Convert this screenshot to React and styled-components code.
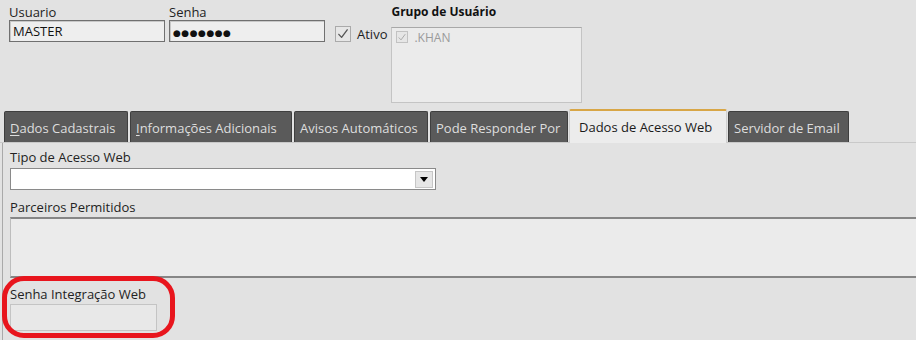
import React from "react";
import styled, { createGlobalStyle } from "styled-components";

const GlobalStyle = createGlobalStyle`
  html, body {
    margin: 0;
    padding: 0;
    background: #e2e2e2;
  }
  body {
    font-family: "Open Sans", "Noto Sans", "Liberation Sans", sans-serif;
    font-size: 13px;
    color: #1e1e1e;
  }
`;

const Page = styled.div`
  position: relative;
  width: 916px;
  height: 340px;
  overflow: hidden;
  background: #e2e2e2;
`;

const TopRow = styled.div`
  display: flex;
  align-items: flex-start;
  padding: 4px 0 0 9px;
  height: 102px;
  box-sizing: border-box;
`;

const Field = styled.div`
  display: flex;
  flex-direction: column;
  width: ${(p) => p.width}px;
  margin-right: ${(p) => p.gap || 0}px;
`;

const Label = styled.div`
  line-height: 16px;
  height: 16px;
  color: ${(p) => (p.bold ? "#111" : "#222")};
  font-weight: ${(p) => (p.bold ? 700 : 400)};
  font-size: ${(p) => (p.bold ? "12px" : "13px")};
  margin-top: ${(p) => p.mt || 0}px;
  margin-bottom: ${(p) => p.mb || 0}px;
  white-space: nowrap;
`;

const TextBox = styled.div`
  box-sizing: border-box;
  height: 22px;
  width: 100%;
  background: #eeeeee;
  border: 1px solid #707070;
  box-shadow: inset 1px 1px 0 #c8c8c8;
  padding: 0 3px;
  font-size: 13px;
  line-height: 20px;
  color: #111;
`;

const Dots = styled.span`
  font-size: 9px;
  letter-spacing: 0.5px;
  font-family: "DejaVu Sans", sans-serif;
  vertical-align: middle;
`;

const CheckWrap = styled.label`
  display: flex;
  align-items: center;
  gap: 6px;
  margin-top: 21px;
  margin-right: 4px;
  font-size: 13px;
  color: #1e1e1e;
`;

const CheckBox = styled.span`
  display: inline-flex;
  align-items: center;
  justify-content: center;
  box-sizing: border-box;
  width: ${(p) => p.size}px;
  height: ${(p) => p.size}px;
  background: #e6e6e6;
  border: 1px solid ${(p) => (p.dim ? "#c2c2c2" : "#aaaaaa")};
`;

const GroupBox = styled.div`
  box-sizing: border-box;
  width: 191px;
  height: 76px;
  background: #ebebeb;
  border: 1px solid #c4c4c4;
  border-top-color: #a8a8a8;
  padding: 3px 4px;
  display: flex;
  align-items: flex-start;
  gap: 6px;
`;

const GroupItem = styled.span`
  font-size: 12px;
  line-height: 13px;
  color: #9a9a9a;
`;

const TabStrip = styled.div`
  display: flex;
  align-items: flex-end;
  gap: 2px;
  padding-left: 4px;
  margin-top: 8px;
  height: 33px;
  border-bottom: 1px solid #c9c9c9;
  box-sizing: border-box;
`;

const Tab = styled.div`
  box-sizing: border-box;
  width: ${(p) => p.width}px;
  height: ${(p) => (p.active ? 34 : 31)}px;
  margin-bottom: ${(p) => (p.active ? -1 : 0)}px;
  margin-left: ${(p) => p.ml || 0}px;
  padding: 0 ${(p) => (p.active ? 9 : 5)}px;
  display: flex;
  align-items: center;
  white-space: nowrap;
  font-size: 13px;
  background: ${(p) => (p.active ? "#ececec" : "#5a5a5a")};
  color: ${(p) => (p.active ? "#1a1a1a" : "#dedede")};
  border: 1px solid ${(p) => (p.active ? "#cfcfcf" : "#3f3f3f")};
  border-top: ${(p) => (p.active ? "2px solid #d8a646" : "1px solid #3f3f3f")};
  border-bottom: none;
  border-radius: 2px 2px 0 0;
  padding-top: ${(p) => (p.active ? 0 : 2)}px;

  u {
    text-decoration-thickness: 1px;
    text-underline-offset: 2px;
  }
`;

const Panel = styled.div`
  margin-left: 2px;
  border-left: 1px solid #a9a9a9;
  padding: 6px 0 0 7px;
  height: 200px;
  display: flex;
  flex-direction: column;
`;

const Select = styled.div`
  box-sizing: border-box;
  width: 426px;
  height: 22px;
  background: #ffffff;
  border: 1px solid #8a8a8a;
  display: flex;
  justify-content: flex-end;
  align-items: center;
  padding-right: 2px;
`;

const DropButton = styled.span`
  box-sizing: border-box;
  width: 18px;
  height: 17px;
  background: #e6e6e6;
  border: 1px solid #c6c6c6;
  display: flex;
  align-items: center;
  justify-content: center;

  &::after {
    content: "";
    border-left: 4.5px solid transparent;
    border-right: 4.5px solid transparent;
    border-top: 5px solid #000;
  }
`;

const ListBox = styled.div`
  box-sizing: border-box;
  width: 920px;
  height: 61px;
  background: #ebebeb;
  border: 1px solid #bdbdbd;
  border-top: 2px solid #868686;
  border-bottom: 2px solid #868686;
  margin-bottom: 8px;
`;

const SmallBox = styled.div`
  box-sizing: border-box;
  width: 147px;
  height: 27px;
  background: #e8e8e8;
  border: 1px solid #c4c4c4;
`;

const Annotation = styled.div`
  position: absolute;
  left: 2px;
  top: 276px;
  width: 173px;
  height: 62px;
  box-sizing: border-box;
  border: 5px solid #e8151d;
  border-radius: 22px;
  pointer-events: none;
`;

const Check = ({ color, size }) => (
  <svg width={size} height={size} viewBox="0 0 16 16">
    <path
      d="M3.2 8.4 L6.4 11.8 L12.8 3.2"
      fill="none"
      stroke={color}
      strokeWidth="1.5"
      strokeLinecap="round"
      strokeLinejoin="round"
    />
  </svg>
);

const tabs = [
  { w: 124, label: <><u>D</u>ados Cadastrais</> },
  { w: 162, label: <><u>I</u>nformações Adicionais</> },
  { w: 134, label: "Avisos Automáticos" },
  { w: 138, label: "Pode Responder Por" },
  { w: 158, label: "Dados de Acesso Web", active: true, ml: -1 },
  { w: 121, label: "Servidor de Email", ml: -1 },
];

export default function App() {
  return (
    <Page>
      <GlobalStyle />
      <TopRow>
        <Field width={156} gap={4}>
          <Label>Usuario</Label>
          <TextBox>MASTER</TextBox>
        </Field>
        <Field width={156} gap={10}>
          <Label>Senha</Label>
          <TextBox>
            <Dots>●●●●●●●</Dots>
          </TextBox>
        </Field>
        <CheckWrap>
          <CheckBox size={16}>
            <Check color="#555" size={14} />
          </CheckBox>
          Ativo
        </CheckWrap>
        <Field width={191}>
          <Label bold mb={7}>Grupo de Usuário</Label>
          <GroupBox>
            <CheckBox size={12} dim>
              <Check color="#a8a8a8" size={11} />
            </CheckBox>
            <GroupItem>.KHAN</GroupItem>
          </GroupBox>
        </Field>
      </TopRow>

      <TabStrip>
        {tabs.map((t, i) => (
          <Tab key={i} width={t.w} active={t.active} ml={t.ml}>
            {t.label}
          </Tab>
        ))}
      </TabStrip>

      <Panel>
        <Label mb={3}>Tipo de Acesso Web</Label>
        <Select>
          <DropButton />
        </Select>
        <Label mt={9} mb={2}>Parceiros Permitidos</Label>
        <ListBox />
        <Label mb={2}>Senha Integração Web</Label>
        <SmallBox />
      </Panel>

      <Annotation />
    </Page>
  );
}
